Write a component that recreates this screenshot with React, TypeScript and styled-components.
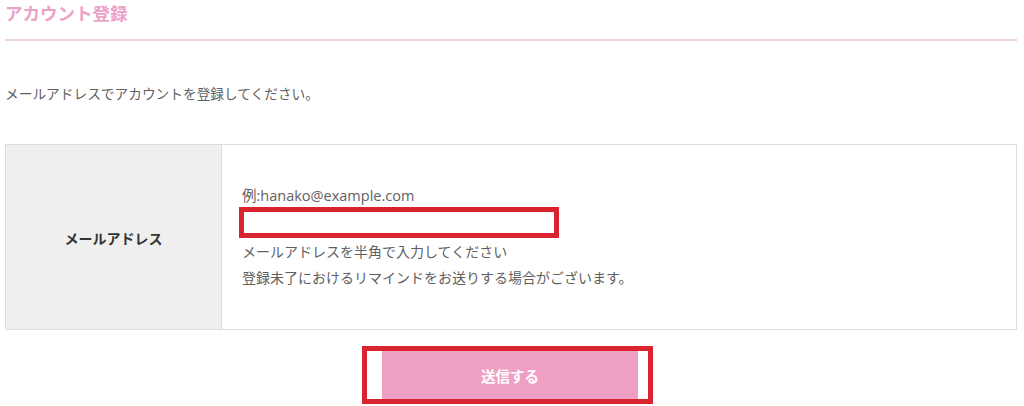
import React from "react";
import styled, { createGlobalStyle } from "styled-components";

const Global = createGlobalStyle`
  html, body { margin: 0; padding: 0; background: #fff; }
  body { font-family: "Noto Sans CJK JP", "Noto Sans", sans-serif; color: #5f5f5f; }
`;

const Page = styled.div`
  width: 1024px;
  height: 406px;
  padding: 0 7px 0 5px;
  box-sizing: border-box;
  overflow: hidden;
`;

const Title = styled.h2`
  margin: 0;
  line-height: 26px;
  font-size: 17.5px;
  font-weight: 700;
  color: #eaa2c6;
  border-bottom: 2px solid #ead0de;
  box-sizing: border-box;
  height: 41px;
`;

const Lead = styled.p`
  margin: 42px 0 0;
  font-size: 13.7px;
  line-height: 20px;
  color: #5f5f5f;
`;

const Table = styled.div`
  margin-top: 41px;
  display: grid;
  grid-template-columns: 216px 1fr;
  border: 1px solid #dcdcdc;
  height: 186px;
  box-sizing: border-box;
`;

const LabelCell = styled.div`
  background: #efefef;
  border-right: 1px solid #dcdcdc;
  display: flex;
  align-items: center;
  justify-content: center;
  font-size: 14px;
  font-weight: 700;
  color: #333;
  padding-top: 2px;
`;

const FieldCell = styled.div`
  display: flex;
  flex-direction: column;
  justify-content: flex-start;
  padding: 42px 0 0 20px;
  font-size: 14px;
  color: #5f5f5f;
`;

const Hint = styled.div`
  line-height: 18px;
  font-family: "Open Sans", "Noto Sans CJK JP", sans-serif;
  font-size: 14.5px;
`;

const Input = styled.input`
  display: block;
  width: 320px;
  height: 31px;
  margin: 2px 0 0 -3px;
  box-sizing: border-box;
  border: 5px solid #d9232e;
  background: #fff;
  outline: none;
`;

const Note = styled.div`
  line-height: 26px;
  &:first-of-type { margin-top: -1px; }
`;

const Actions = styled.div`
  display: flex;
  justify-content: center;
  margin-top: 16px;
`;

const Highlight = styled.div`
  display: flex;
  border: 5px solid #d9232e;
  padding: 0 10px 0 15px;
  background: #fff;
  height: 58px;
  box-sizing: border-box;
  margin-right: 7px;
`;

const SubmitButton = styled.button`
  width: 256px;
  height: 48px;
  border: none;
  background: #f09fc4;
  color: #fff;
  font-family: "Noto Sans CJK JP", sans-serif;
  font-size: 14.5px;
  font-weight: 700;
  cursor: pointer;
`;

export default function App() {
  return (
    <Page>
      <Global />
      <Title>アカウント登録</Title>
      <Lead>メールアドレスでアカウントを登録してください。</Lead>
      <Table>
        <LabelCell>メールアドレス</LabelCell>
        <FieldCell>
          <Hint>例:hanako@example.com</Hint>
          <Input type="email" />
          <Note>メールアドレスを半角で入力してください</Note>
          <Note>登録未了におけるリマインドをお送りする場合がございます。</Note>
        </FieldCell>
      </Table>
      <Actions>
        <Highlight>
          <SubmitButton>送信する</SubmitButton>
        </Highlight>
      </Actions>
    </Page>
  );
}
